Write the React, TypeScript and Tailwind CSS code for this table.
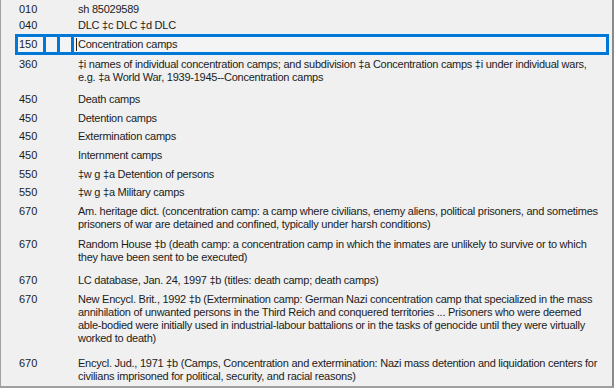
import React from "react";

type Field = {
  tag: string;
  lines: string[];
  h: number;
};

const fields: Field[] = [
  { tag: "010", lines: ["sh 85029589"], h: 16 },
  { tag: "040", lines: ["DLC ‡c DLC ‡d DLC"], h: 18 },
  {
    tag: "360",
    lines: [
      "‡i names of individual concentration camps; and subdivision ‡a Concentration camps ‡i under individual wars,",
      "e.g. ‡a World War, 1939-1945--Concentration camps",
    ],
    h: 35,
  },
  { tag: "450", lines: ["Death camps"], h: 19 },
  { tag: "450", lines: ["Detention camps"], h: 18 },
  { tag: "450", lines: ["Extermination camps"], h: 19 },
  { tag: "450", lines: ["Internment camps"], h: 19 },
  { tag: "550", lines: ["‡w g ‡a Detention of persons"], h: 18 },
  { tag: "550", lines: ["‡w g ‡a Military camps"], h: 19 },
  {
    tag: "670",
    lines: [
      "Am. heritage dict. (concentration camp: a camp where civilians, enemy aliens, political prisoners, and sometimes",
      "prisoners of war are detained and confined, typically under harsh conditions)",
    ],
    h: 33,
  },
  {
    tag: "670",
    lines: [
      "Random House ‡b (death camp: a concentration camp in which the inmates are unlikely to survive or to which",
      "they have been sent to be executed)",
    ],
    h: 36,
  },
  {
    tag: "670",
    lines: ["LC database, Jan. 24, 1997 ‡b (titles: death camp; death camps)"],
    h: 19,
  },
  {
    tag: "670",
    lines: [
      "New Encycl. Brit., 1992 ‡b (Extermination camp: German Nazi concentration camp that specialized in the mass",
      "annihilation of unwanted persons in the Third Reich and conquered territories ... Prisoners who were deemed",
      "able-bodied were initially used in industrial-labour battalions or in the tasks of genocide until they were virtually",
      "worked to death)",
    ],
    h: 64,
  },
  {
    tag: "670",
    lines: [
      "Encycl. Jud., 1971 ‡b (Camps, Concentration and extermination: Nazi mass detention and liquidation centers for",
      "civilians imprisoned for political, security, and racial reasons)",
    ],
    h: 32,
  },
];

const Row = ({ field }: { field: Field }) => (
  <div className="flex pt-[3px]" style={{ height: field.h }}>
    <div className="w-[77px] pl-[18px] shrink-0">{field.tag}</div>
    <div className="flex flex-col tracking-[-0.25px]">
      {field.lines.map((line, idx) => (
        <div key={idx} className="whitespace-nowrap">
          {line}
        </div>
      ))}
    </div>
  </div>
);

// the field being edited: tag box, two indicator boxes, then the text box
const ActiveRow = () => (
  <div className="pl-[14px] pr-[3px]">
    <div className="flex h-[21px] bg-[#0078d7] p-[3px] gap-[3px]">
      <div className="w-[25px] bg-[#f4f4f4] pl-[1px] leading-[15px]">150</div>
      <div className="w-[11px] bg-[#f4f4f4]" />
      <div className="w-[11px] bg-[#f4f4f4]" />
      <div className="flex-1 bg-[#f4f4f4] pl-[3px] leading-[15px] flex items-center tracking-[-0.25px]">
        <span className="w-px h-[13px] bg-[#222] mr-px -ml-px" />
        Concentration camps
      </div>
    </div>
  </div>
);

export default function App() {
  const before = fields.slice(0, 2);
  const after = fields.slice(2);
  return (
    <div
      className="w-[614px] h-[388px] bg-[#f0f0f0] border-l border-l-[#a0a0a0] border-r-2 border-r-[#8a8a8a] border-b-2 border-b-[#a0a0a0] overflow-hidden text-[11px] leading-[13px] text-[#1c1c1c]"
      style={{ fontFamily: '"Liberation Sans", Arial, sans-serif' }}
    >
      {before.map((f, idx) => (
        <Row key={idx} field={f} />
      ))}
      <ActiveRow />
      {after.map((f, idx) => (
        <Row key={idx} field={f} />
      ))}
    </div>
  );
}
